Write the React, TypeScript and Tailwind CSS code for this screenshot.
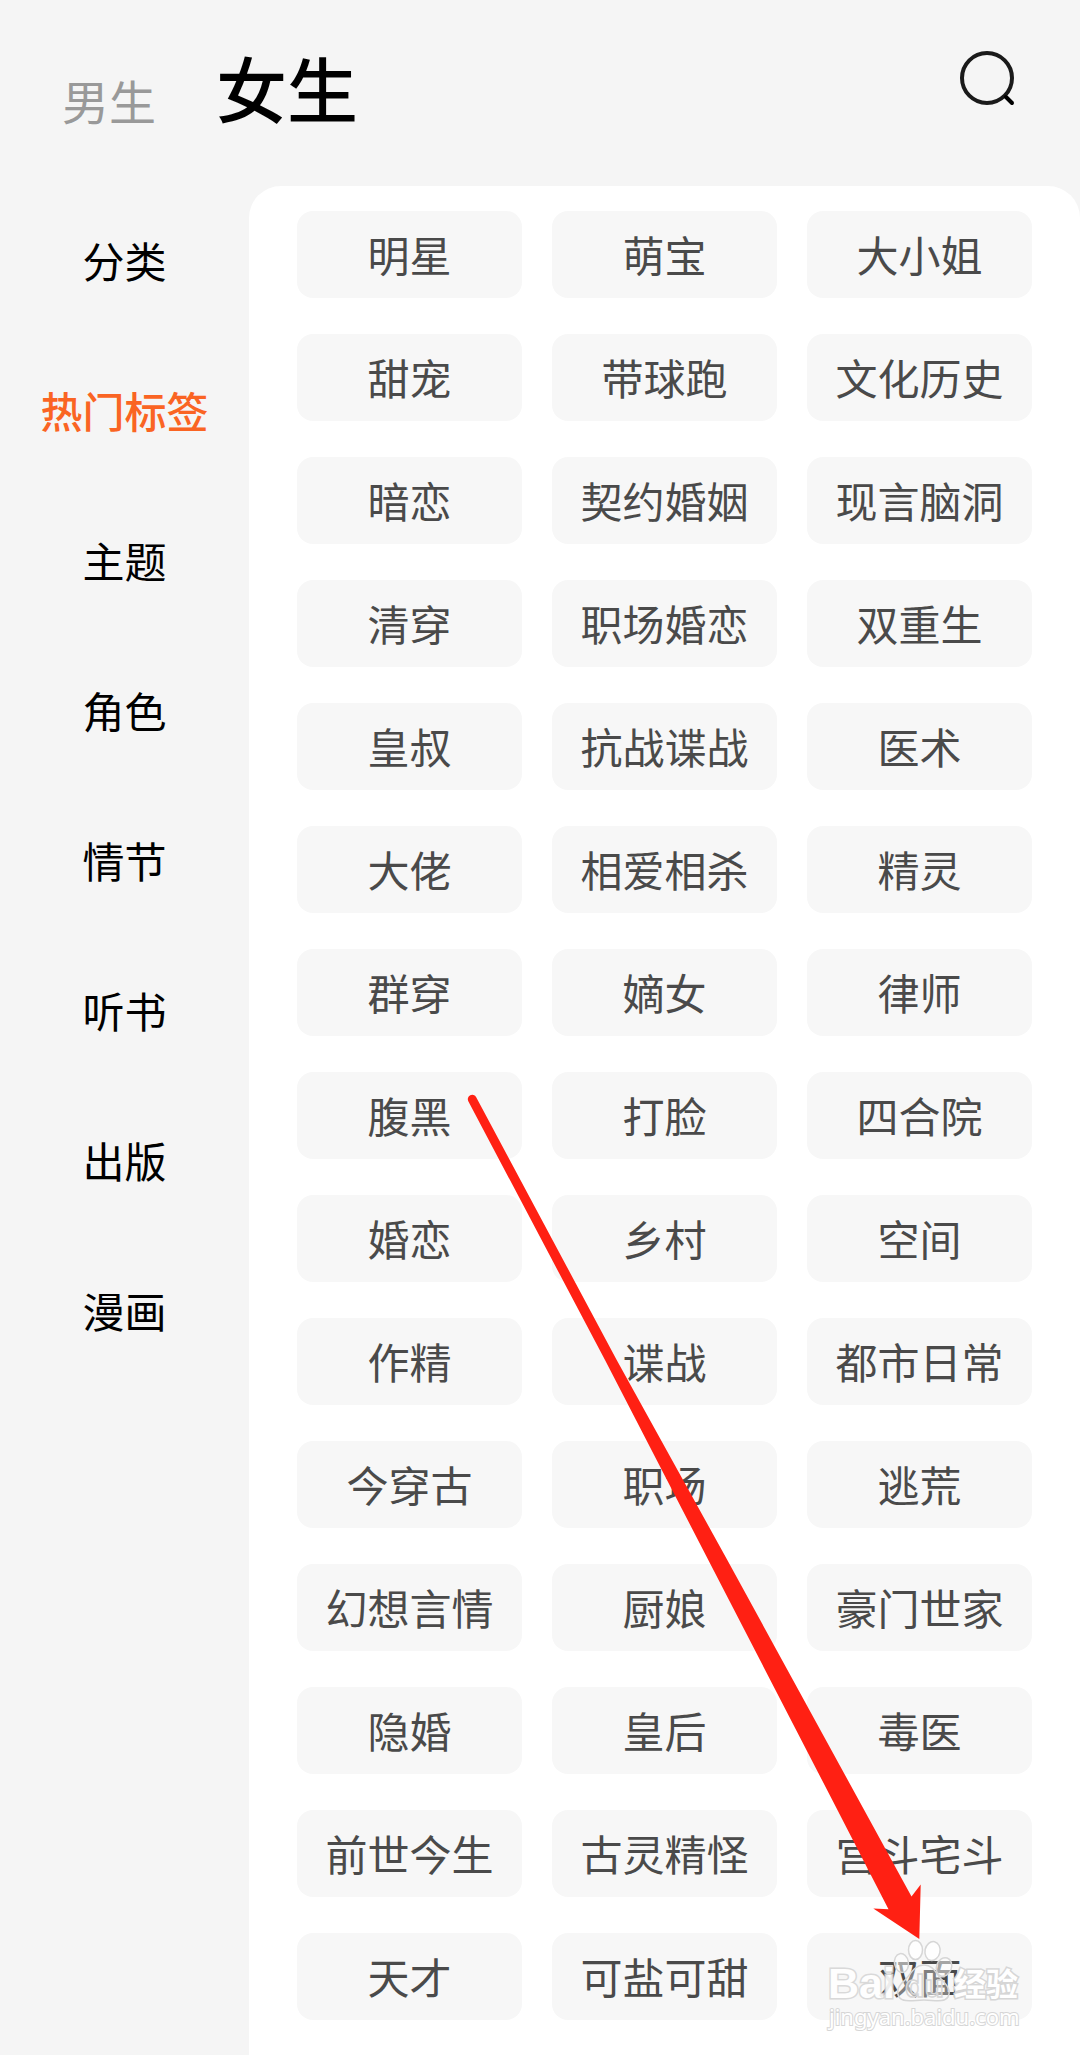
import { useState } from "react"

const channels = ["男生", "女生"]

const categories = ["分类", "热门标签", "主题", "角色", "情节", "听书", "出版", "漫画"]

const tags = [
  "明星", "萌宝", "大小姐",
  "甜宠", "带球跑", "文化历史",
  "暗恋", "契约婚姻", "现言脑洞",
  "清穿", "职场婚恋", "双重生",
  "皇叔", "抗战谍战", "医术",
  "大佬", "相爱相杀", "精灵",
  "群穿", "嫡女", "律师",
  "腹黑", "打脸", "四合院",
  "婚恋", "乡村", "空间",
  "作精", "谍战", "都市日常",
  "今穿古", "职场", "逃荒",
  "幻想言情", "厨娘", "豪门世家",
  "隐婚", "皇后", "毒医",
  "前世今生", "古灵精怪", "宫斗宅斗",
  "天才", "可盐可甜", "双面",
]

function SearchIcon() {
  return (
    <svg width="64" height="64" viewBox="-2 -2 64 64" fill="none" strokeLinecap="round">
      <circle cx="30" cy="30" r="25" stroke="#1a1a1a" strokeWidth="4" />
      <path d="M49 49l6 6" stroke="#000" strokeWidth="4" />
    </svg>
  )
}

function Arrow() {
  return (
    <svg className="pointer-events-none absolute left-[460px] top-[1090px]" width="470" height="860" viewBox="460 1090 470 860">
      <path
        fill="#ff2013"
        d="M468.3 1101.2A4.4 4.4 0 0 1 476.2 1097.2L616.7 1360L727.3 1560L858.7 1800L911.5 1896.5L920.7 1884.5L919.3 1939L873.3 1908.5L888.5 1909.3L832.3 1800L708.3 1560L605 1360Z"
      />
    </svg>
  )
}

function Watermark() {
  return (
    <svg className="pointer-events-none absolute left-[820px] top-[1930px]" width="220" height="110" viewBox="820 1930 220 110">
      <g fill="#fff" fillOpacity="0.5" stroke="#d6d6d6" strokeWidth="1.5">
        <g fillOpacity="0.85">
          <ellipse cx="915.5" cy="1950" rx="7" ry="9.5" />
          <ellipse cx="932.5" cy="1951" rx="7.5" ry="9.5" transform="rotate(12 932.5 1951)" />
        </g>
        <ellipse cx="901.5" cy="1963" rx="7" ry="9.5" transform="rotate(-10 901.5 1963)" />
        <ellipse cx="944" cy="1967" rx="7.5" ry="9.5" transform="rotate(20 944 1967)" />
        <path fillOpacity="0.3" d="M924 1965C914 1965 911 1974 905 1980C898 1986 896 1992 899 1997C903 2003 914 2000 924 2000C934 2000 944 2003 948 1997C951 1991 948 1986 942 1980C936 1974 934 1965 924 1965Z" />
      </g>
      <g fill="#fff" stroke="#d6d6d6" fontFamily='"Liberation Sans", "Noto Sans CJK SC", sans-serif' fontWeight="700">
        <text x="828" y="1998" fontSize="43" strokeWidth="3" paintOrder="stroke" opacity="0.9">Bai</text>
        <text x="905" y="1997" fontSize="32" strokeWidth="1.5" fillOpacity="0.4">du</text>
        <text x="954" y="1996" fontSize="32" strokeWidth="3" paintOrder="stroke">经验</text>
      </g>
      <text x="829" y="2025" fontSize="22" fill="#fff" stroke="#d6d6d6" strokeWidth="2" paintOrder="stroke" fontFamily='"Noto Sans", sans-serif'>
        jingyan.baidu.com
      </text>
    </svg>
  )
}

export default function App() {
  const [channel, setChannel] = useState("女生")
  const [category, setCategory] = useState("热门标签")

  return (
    <div className="relative flex min-h-screen flex-col overflow-hidden bg-[#f5f5f5] font-['Noto_Sans_CJK_SC',sans-serif]">
      <header className="flex h-[186px] items-start justify-between pl-[62px] pr-[61px] pt-[46px]">
        <nav className="flex items-end gap-[60px]">
          {channels.map((name) => (
            <button
              key={name}
              onClick={() => setChannel(name)}
              className={
                name === channel
                  ? "text-[71px] font-medium leading-[80px] text-black"
                  : "text-[47px] leading-[52px] text-[#999]"
              }
            >
              {name}
            </button>
          ))}
        </nav>
        <button aria-label="搜索">
          <SearchIcon />
        </button>
      </header>

      <div className="flex flex-1">
        <aside className="flex w-[249px] shrink-0 flex-col">
          {categories.map((name) => (
            <button
              key={name}
              onClick={() => setCategory(name)}
              className={
                name === category
                  ? "h-[150px] pb-1 text-[42px] font-medium text-[#fa6423]"
                  : "h-[150px] pb-1 text-[42px] text-black"
              }
            >
              {name}
            </button>
          ))}
        </aside>

        <main className="flex-1 rounded-t-[32px] bg-white px-12 pb-9 pt-[25px]">
          <div className="grid grid-cols-3 gap-x-[30px] gap-y-9">
            {tags.map((tag) => (
              <button key={tag} className="h-[87px] rounded-2xl bg-[#f7f7f7] pb-0.5 text-[42px] text-[#4a4a4a]">
                {tag}
              </button>
            ))}
          </div>
        </main>
      </div>

      <Arrow />
      <Watermark />
    </div>
  )
}
